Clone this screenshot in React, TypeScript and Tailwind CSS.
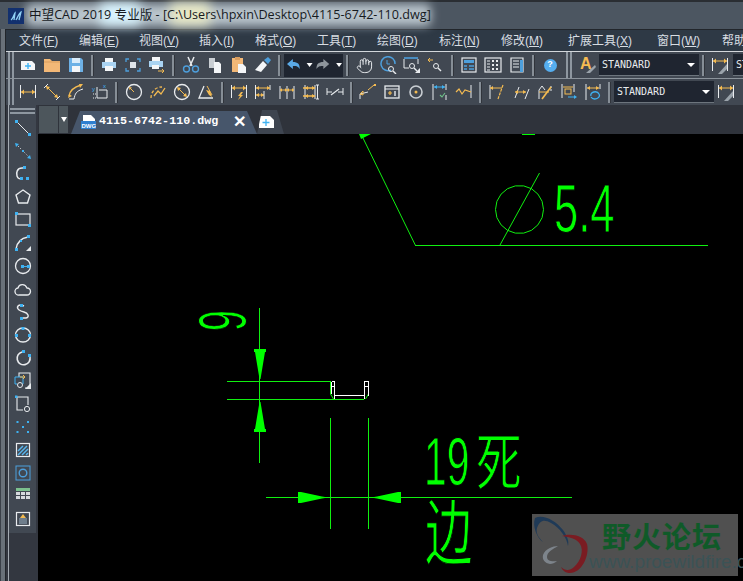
import type { ReactNode } from "react"
import { Hand } from "lucide-react"

const B = "#3fb2f2"
const W = "#e8ebee"
const O = "#f4bb52"
const G = "#00ff00"

const Ico = ({ children }: { children: ReactNode }) => (
  <svg width="18" height="18" viewBox="0 0 18 18" fill="none">
    {children}
  </svg>
)

const Btn = ({ children }: { children: ReactNode }) => (
  <div className="flex h-full w-6 shrink-0 items-center justify-center">{children}</div>
)

const Sep = () => (
  <div className="flex h-full w-[9px] shrink-0 items-center justify-center">
    <div className="h-[21px] w-[3px] border-r border-[#30343b] bg-[#868e96]" />
  </div>
)

const Grip = () => (
  <div className="flex h-full w-[10px] shrink-0 items-center justify-start gap-[2px] pl-[2px]">
    <div className="h-[26px] w-[2px] bg-[#8e97a0]" />
    <div className="h-[26px] w-[2px] bg-[#8e97a0]" />
  </div>
)

const Combo = () => (
  <div className="flex h-[22px] w-[100px] shrink-0 items-center justify-between border-b border-[#6d757d] bg-[#1f2530] px-[3px] font-['DejaVu_Sans_Mono',monospace] text-[10px] text-[#e8ebee]">
    <span>STANDARD</span>
    <span className="mr-[1px] h-0 w-0 border-x-[4px] border-t-[4px] border-x-transparent border-t-white" />
  </div>
)

// little dimension glyph: two white bars with a gold arrow between them
const DimBars = ({ y = 5 }: { y?: number }) => (
  <>
    <path d="M1.5 2v13M16.5 2v13" stroke={W} />
    <path d={`M2 ${y + 2}h14`} stroke={O} />
    <path d={`M2 ${y + 2}l3-2.5v5zM16 ${y + 2}l-3-2.5v5z`} fill={O} />
  </>
)

const Lens = ({ x = 12, y = 12 }: { x?: number; y?: number }) => (
  <>
    <circle cx={x} cy={y} r="2.5" stroke={W} />
    <path d={`M${x + 2} ${y + 2}l3 3`} stroke={W} strokeWidth="1.4" />
  </>
)

const top1: ReactNode[] = [
  <Ico><path d="M2 5h11l3 3v6H2z" fill="#f4f6f8" /><path d="M9 7v6M6 10h6" stroke={B} strokeWidth="1.4" /></Ico>,
  <Ico><path d="M1 3h6l2 2h8v11H1z" fill="#f3b877" /><path d="M1 6h16" stroke="#d99d5f" /></Ico>,
  <Ico><path d="M2 2h12l2 2v12H2z" fill="#6db1e6" /><rect x="5" y="2" width="8" height="5" fill="#d9ecfa" /><rect x="5" y="10" width="8" height="6" fill="#f4f6f8" /></Ico>,
]
const top2: ReactNode[] = [
  <Ico><rect x="5" y="2" width="8" height="4" fill="#f4f6f8" /><rect x="2" y="6" width="14" height="6" fill="#a9d3f2" /><rect x="5" y="10" width="8" height="5" fill="#f4f6f8" /></Ico>,
  <Ico><path d="M2 6V3h3M13 3h3v3M16 12v3h-3M5 15H2v-3" stroke="#4d9fdc" strokeWidth="1.3" /><rect x="6" y="6" width="6" height="6" fill="#dfe3e7" /></Ico>,
  <Ico><rect x="4" y="1" width="8" height="4" fill="#f4f6f8" /><rect x="1" y="5" width="14" height="6" fill="#a9d3f2" /><rect x="4" y="9" width="7" height="4" fill="#f4f6f8" /><path d="M10 15h6M14 13l2 2-2 2" stroke={O} /></Ico>,
]
const top3: ReactNode[] = [
  <Ico><path d="M6 1l4 9M12 1l-4 9" stroke={W} strokeWidth="1.5" /><circle cx="4.5" cy="13" r="3" stroke="#4d9fdc" strokeWidth="1.4" /><circle cx="13.5" cy="13" r="3" stroke="#4d9fdc" strokeWidth="1.4" /></Ico>,
  <Ico><path d="M3 2h6v10H3z" fill="#c9ced3" /><path d="M8 6h5l2 2v9H8z" fill="#f4f6f8" /></Ico>,
  <Ico><rect x="2" y="2" width="11" height="14" fill="#f3b877" /><rect x="5" y="1" width="5" height="3" fill="#d99d5f" /><path d="M8 8h5l3 3v6H8z" fill="#f4f6f8" /></Ico>,
  <Ico><path d="M9 5l4 4-6 7-6-2z" fill="#f4f6f8" /><path d="M10 4l4-3 3 3-3 4z" fill="#4d9fdc" /></Ico>,
]
const top4: ReactNode[] = [
  <Hand size={17} color={W} strokeWidth={1.4} />,
  <Ico><path d="M12 14a7 7 0 1 1 4-6" stroke="#4d9fdc" strokeWidth="1.5" /><path d="M8 4v4h3" stroke="#4d9fdc" /><Lens x={12} y={13} /></Ico>,
  <Ico><path d="M1 2h14" stroke="#4d9fdc" strokeWidth="1.6" /><path d="M1 3v9h5M15 3v5" stroke={W} /><Lens x={9} y={10} /><path d="M17 12v5h-5z" fill={W} /></Ico>,
  <Ico><path d="M1 4h5M1 4l2-2M1 4l2 2" stroke={O} /><Lens x={9} y={10} /></Ico>,
]
const top5: ReactNode[] = [
  <Ico><rect x="2" y="2" width="14" height="14" stroke={W} strokeWidth="1.2" /><rect x="4" y="4" width="10" height="3" fill="#4d9fdc" /><path d="M4 10h3M9 10h5M4 13h3M9 13h5" stroke="#4d9fdc" strokeWidth="1.5" /></Ico>,
  <Ico><rect x="1" y="2" width="16" height="14" stroke={W} strokeWidth="1.2" /><path d="M3 5h3M3 8h3M3 11h3M3 14h3" stroke={W} /><path d="M8 4h2v2H8zM12 4h2v2h-2zM8 8h2v2H8zM12 8h2v2h-2zM8 12h2v2H8zM12 12h2v2h-2z" fill={W} /></Ico>,
  <Ico><path d="M3 2h12v14H3z" stroke={W} strokeWidth="1.2" /><path d="M5 5h6M5 8h6M5 11h6" stroke={W} /><path d="M12 4h3v12h-3z" fill="#4d9fdc" /></Ico>,
]
const row2a: ReactNode[] = [
  <Ico><DimBars y={7} /></Ico>,
  <Ico><path d="M1 5l4-4M13 17l4-4" stroke={W} /><path d="M3 3l12 12" stroke={O} /><path d="M3 3l4 1-3 3zM15 15l-4-1 3-3z" fill={O} /></Ico>,
  <Ico><path d="M2 16h5c1-5 2-8 9-10" stroke={W} /><path d="M2 13c1-6 5-9 12-11" stroke={O} strokeWidth="1.4" /><path d="M1 15l4-2-3-2zM16 1l-4 0 1 4z" fill={O} /></Ico>,
  <Ico><path d="M6 4v11h10V7H8" stroke={W} /><path d="M2 11h4M2 15h4" stroke={W} strokeDasharray="1 1" /><text x="1" y="8" fontSize="6" fill={B}>y</text><text x="12" y="5" fontSize="6" fill={B}>x</text></Ico>,
]
const row2b: ReactNode[] = [
  <Ico><circle cx="9" cy="9" r="7.5" stroke={W} strokeWidth="1.3" /><path d="M9 9L5 5" stroke={O} /><path d="M4 4l3 .5-2.5 2.5z" fill={O} /></Ico>,
  <Ico><path d="M2 15c0-5 3-11 11-11" stroke={O} strokeDasharray="3 2" strokeWidth="1.3" /><path d="M5 13l4-5 3 3 4-6" stroke={O} strokeWidth="1.3" /></Ico>,
  <Ico><circle cx="9" cy="9" r="7.5" stroke={W} strokeWidth="1.3" /><path d="M5 5l8 8" stroke={O} /><path d="M4 4l4 1-3 3zM14 14l-4-1 3-3z" fill={O} /></Ico>,
  <Ico><path d="M7 3L2 15h14" stroke={W} strokeWidth="1.3" /><path d="M10 3l5 9" stroke={O} /><path d="M9 7l4 1 2 6-3-2z" fill={O} /></Ico>,
]
const row2c: ReactNode[] = [
  <Ico><DimBars y={3} /><path d="M11 9l-3 4h2l-2 4 5-5h-2l2-3z" fill={O} /></Ico>,
  <Ico><path d="M1.5 2v14M16 2v5" stroke={W} /><path d="M2 5h14M2 12h8" stroke={O} /><path d="M2 5l3-2v4zM16 5l-3-2v4zM2 12l3-2v4zM10 12l-3-2v4z" fill={O} /><path d="M10 8v8" stroke={W} /></Ico>,
  <Ico><path d="M2 3v13M9 3v13M16 3v13" stroke={W} /><path d="M2 7h14" stroke={O} /><path d="M2 7l2-2v4zM9 7l-2-2v4zM9 7l2-2v4zM16 7l-2-2v4z" fill={O} /></Ico>,
  <Ico><path d="M3 2v14M13 2v14" stroke={W} /><path d="M14 2h3M14 16h3M15.5 2v14" stroke={W} /><path d="M1 5h12M1 13h12" stroke={O} strokeWidth="1.3" /><path d="M3 5l3-2v4zM13 5l-3-2v4zM3 13l3-2v4zM13 13l-3-2v4z" fill={O} /></Ico>,
  <Ico><path d="M1 5v7M17 5v7M1 9h5M12 9h5" stroke={W} /><path d="M5 12l8-6" stroke={W} strokeWidth="1.2" /></Ico>,
]
const row2d: ReactNode[] = [
  <Ico><path d="M1 16v-5l8-2" stroke={W} /><path d="M1 11l3-3v4zM9 7l6-5" stroke={O} /><rect x="15" y="1" width="2" height="2" fill={O} /></Ico>,
  <Ico><rect x="2" y="3" width="14" height="12" stroke={W} strokeWidth="1.3" /><path d="M2 6h14" stroke={W} /><path d="M5 10h4M7 8v4" stroke={O} strokeWidth="1.2" /><path d="M12 8v5" stroke={W} strokeWidth="1.4" /></Ico>,
  <Ico><circle cx="9" cy="9" r="6" stroke="#c9ced3" strokeWidth="1.6" /><circle cx="9" cy="9" r="1.5" fill={O} /></Ico>,
  <Ico><path d="M2 1v16M15 1v6M15 12v5" stroke={W} /><path d="M3 4h11" stroke={B} /><path d="M3 4l3-2v4zM14 4l-3-2v4z" fill={B} /><path d="M9 12l2 2 3-4" stroke="#6fc28a" strokeWidth="1.1" /></Ico>,
  <Ico><path d="M16 2v13" stroke={W} /><path d="M1 9l3-3 3 5 3-4 6 2" stroke={O} strokeWidth="1.2" /></Ico>,
]
const row2e: ReactNode[] = [
  <Ico><path d="M2 2v14" stroke={W} /><path d="M2 5h12" stroke={O} /><path d="M2 5l3-2v4z" fill={O} /><path d="M15 2l-5 14" stroke={O} strokeWidth="1.2" strokeDasharray="3 1" /></Ico>,
  <Ico><path d="M3 15l4-11M13 16l4-10" stroke={W} /><path d="M3 9h11" stroke={O} /><path d="M3 9l3-2v4zM14 9l-3-2v4z" fill={O} /></Ico>,
  <Ico><path d="M3 16V7l3-4 3 4" stroke={W} /><path d="M15 3v5" stroke={W} strokeDasharray="2 1" /><path d="M3 9h10" stroke={O} /><path d="M6 16l9-12" stroke={O} strokeWidth="1.7" /></Ico>,
  <Ico><path d="M2 1v14M14 1v8" stroke={W} /><path d="M3 4h10" stroke={O} /><rect x="5" y="6" width="6" height="5" stroke={O} /><path d="M8 14h6" stroke={B} /><path d="M17 14l-3-2v4z" fill={B} /></Ico>,
  <Ico><path d="M2 1v16M16 1v5" stroke={W} /><path d="M3 5h12" stroke={O} /><path d="M3 5l3-2v4zM15 5l-3-2v4z" fill={O} /><path d="M7 13a4 3 0 0 1 8-2M15 11a4 3 0 0 1-8 3" stroke={B} strokeWidth="1.3" /></Ico>,
]
const dimStyle = (
  <Ico>
    <DimBars y={3} />
    <path d="M16 8v5l-5 5H7z" fill="#9aa3ab" />
  </Ico>
)

const side: ReactNode[] = [
  <Ico><path d="M3 3l12 12" stroke={W} /><rect x="1" y="1" width="3" height="3" fill={B} /><rect x="14" y="14" width="3" height="3" fill={B} /></Ico>,
  <Ico><path d="M2 2l14 14" stroke={W} strokeDasharray="1 2" /><path d="M1 1l4 1-3 3zM17 17l-4-1 3-3z" fill={B} /><rect x="8" y="8" width="2" height="2" fill={B} /></Ico>,
  <Ico><path d="M11 3H8C3 3 2 8 3 11c1 3 3 3 6 3" stroke={W} strokeWidth="1.5" /><rect x="9" y="1" width="3" height="3" fill={B} /><rect x="6" y="12" width="3" height="3" fill={B} /><rect x="12" y="12" width="3" height="3" fill={B} /></Ico>,
  <Ico><path d="M9 2l7 5-2.5 8h-9L2 7z" stroke={W} strokeWidth="1.4" /></Ico>,
  <Ico><rect x="2" y="3" width="14" height="11" stroke={W} strokeWidth="1.2" /><rect x="1" y="1" width="3" height="3" fill={B} /><rect x="14" y="13" width="3" height="3" fill={B} /></Ico>,
  <Ico><path d="M2 15C3 8 8 4 14 3" stroke={W} strokeWidth="1.5" /><rect x="13" y="1" width="3" height="3" fill={B} /><rect x="1" y="14" width="3" height="3" fill={B} /><rect x="6" y="6" width="2" height="2" fill={B} /><path d="M17 12v5h-5z" fill={W} /></Ico>,
  <Ico><circle cx="9" cy="9" r="7.5" stroke={W} strokeWidth="1.3" /><rect x="7" y="8" width="3" height="3" fill={B} /><rect x="13" y="8" width="3" height="3" fill={B} /><path d="M9 9.5h5" stroke={B} /></Ico>,
  <Ico><path d="M5 15a3.5 3.5 0 0 1-1-7c1-4 7-5 9 0a3.5 3.5 0 0 1 0 7z" stroke={W} strokeWidth="1.3" /></Ico>,
  <Ico><path d="M4 3c2-2 6 0 6 0M4 3c-2 3 2 5 6 6 4 1 6 5 2 6H7" stroke={W} strokeWidth="1.4" /><rect x="6" y="1" width="3" height="3" fill={B} /><rect x="6" y="14" width="3" height="3" fill={B} /></Ico>,
  <Ico><ellipse cx="9" cy="9" rx="7.5" ry="7" stroke={W} strokeWidth="1.4" /><rect x="7.5" y="1" width="3" height="3" fill={B} /><rect x="1" y="8" width="3" height="3" fill={B} /><rect x="14" y="8" width="3" height="3" fill={B} /></Ico>,
  <Ico><path d="M8 3a6.5 6.5 0 1 0 8 5" stroke={W} strokeWidth="1.6" /><rect x="8" y="1" width="3" height="3" fill={B} /><rect x="14" y="5" width="3" height="3" fill={B} /></Ico>,
  <Ico><path d="M5 5V1h11v15h-5" stroke={W} strokeWidth="1.1" /><path d="M1 5h8v7" stroke={B} /><path d="M1 5v7h2" stroke={B} /><path d="M6 5h5M9 3l2 2-2 2" stroke={O} /><circle cx="6" cy="13" r="2.5" stroke={W} /><path d="M17 11v6h-6z" fill={W} /></Ico>,
  <Ico><path d="M3 2h11v8M3 2v13h6" stroke={W} strokeWidth="1.1" /><rect x="1" y="0.5" width="2.5" height="2.5" fill={B} /><circle cx="13" cy="14" r="2.6" stroke={W} /></Ico>,
  <Ico><path d="M2.5 3h2v2h-2zM13 3h2v2h-2zM8 8h2v2H8zM2.5 13h2v2h-2zM13 13h2v2h-2z" fill={B} /></Ico>,
  <Ico><rect x="2.5" y="2.5" width="13" height="13" stroke={W} strokeWidth="1.2" /><path d="M4 10l5-5M4 14l9-9M8 14l6-6M12 14l2-2" stroke="#58b6ee" strokeWidth="1.5" /></Ico>,
  <Ico><rect x="2" y="2" width="14" height="14" stroke="#4d9fdc" strokeWidth="1" /><circle cx="9" cy="9" r="3.8" stroke="#4d9fdc" strokeWidth="1.4" /></Ico>,
  <Ico><rect x="2" y="1" width="14" height="3" fill="#7cc08e" /><path d="M2 5h4v3H2zM7 5h4v3H7zM12 5h4v3h-4zM2 9h4v3H2zM7 9h4v3H7zM12 9h4v3h-4z" fill="#d5d9dd" /></Ico>,
  <Ico><rect x="2.5" y="2.5" width="13" height="13" stroke={W} strokeWidth="1.2" /><path d="M9 4l3 4H6z" fill={O} /><path d="M5 9h8M5 11h8M5 13h8" stroke="#9fb4c6" /></Ico>,
]

const menus: [string, string, string][] = [
  ["文件", "F", "w-[60px]"],
  ["编辑", "E", "w-[60px]"],
  ["视图", "V", "w-[60px]"],
  ["插入", "I", "w-[56px]"],
  ["格式", "O", "w-[62px]"],
  ["工具", "T", "w-[60px]"],
  ["绘图", "D", "w-[62px]"],
  ["标注", "N", "w-[62px]"],
  ["修改", "M", "w-[67px]"],
  ["扩展工具", "X", "w-[89px]"],
  ["窗口", "W", "w-[65px]"],
  ["帮助", "H", "w-[60px]"],
]

// the drawn diameter symbol is a coarse polygon in the original
const diaPts = Array.from({ length: 18 }, (_, i) => {
  const a = (i / 18) * Math.PI * 2
  return `${(519.5 + 24 * Math.cos(a)).toFixed(1)},${(209.5 + 24 * Math.sin(a)).toFixed(1)}`
}).join(" ")

const Arrow = ({ d }: { d: string }) => <path d={d} fill={G} />

const Drawing = () => (
  <svg className="h-full w-full" viewBox="38 134 705 447" fill="none">
    {/* leader and diameter note */}
    <g stroke="#10f010" strokeWidth="1">
      <path d="M362 136L415.5 245.5" />
      <path d="M415 245.5H708" shapeRendering="crispEdges" />
      <path d="M500 245L539.5 173" />
      <polygon points={diaPts} />
      <path d="M259.5 308V463M227 381.5H331M227 399.5H364M330.5 418V529M368.5 418V529M266 497.5H572" shapeRendering="crispEdges" />
      <path d="M330.5 381v13l3 5M368.5 381v13l-3 5" />
    </g>
    <Arrow d="M359 134h12l-10 5z" />
    <rect x="522" y="133" width="13" height="2" fill={G} />
    <Arrow d="M254 349h12v3h-1l-3.5 21-1 6h-1l-1-6-3.5-21h-1z" />
    <Arrow d="M254 432h12v-3h-1l-3.5-21-1-6h-1l-1 6-3.5 21h-1z" />
    <Arrow d="M298 492h3l21 4.5 6 1-6 1-21 4.5h-3z" />
    <Arrow d="M401 492h-3l-21 4.5-6 1 6 1 21 4.5h3z" />
    {/* part outline */}
    <g stroke="#ffffff" strokeWidth="1" shapeRendering="crispEdges">
      <path d="M331.5 381.5h3v14h30v-14h4v14M331.5 381.5v12M331 386.5h3M364 386.5h4M334.5 395.5v3M364.5 395.5v3" />
    </g>
    {/* dimension text, black outline keeps the strokes thin like the CAD font */}
    <g className="font-['Liberation_Sans','Noto_Sans_CJK_SC',sans-serif]" fill={G} stroke="#000000" strokeWidth="1">
      <text transform="translate(554,232) scale(0.64,1)" fontSize="68">5.4</text>
      <text transform="translate(424,485) scale(0.6,1)" fontSize="68">19</text>
      <text transform="translate(246,331) rotate(-90) scale(0.55,1)" fontSize="68">9</text>
      <text transform="translate(476,485) scale(0.95,1.3)" fontSize="48" strokeWidth="0.7">死</text>
      <text transform="translate(425,558) scale(0.95,1.42)" fontSize="50" strokeWidth="0.7">边</text>
    </g>
  </svg>
)

const Watermark = () => (
  <div className="absolute bottom-[5px] right-[5px] flex h-[62px] w-[206px] bg-[#505050]">
    <svg className="absolute left-0 top-0" width="62" height="62" viewBox="0 0 62 62" fill="none">
      <path d="M3 4c8-4 20 2 28 12 5 7 6 12 5 16C35 24 28 14 19 9 12 5 8 6 5 14c-1 4 0 8 6 14C5 24 0 12 3 4z" fill="#1f3a57" />
      <path d="M30 22c8-3 22-1 25 8 3 12-6 30-18 29-3 0-7-3-8-6 4 4 9 4 13 0 7-6 10-17 6-23-3-5-10-7-18-8z" fill="#7a1c22" />
      <path d="M26 32c-5 0-13 3-15 9-1 5 2 8 7 9 2 0 5-1 7-3-5 1-10 0-10-4 0-5 6-8 11-11z" fill="#7d848b" />
    </svg>
    <div className="relative ml-[57px] flex flex-col">
      <div className="ml-[13px] mt-[6px] font-['Noto_Sans_CJK_SC',sans-serif] text-[29px] font-bold leading-[30px] tracking-[1px] text-[#0f5a28]">野火论坛</div>
      <div className="mt-[1px] whitespace-nowrap font-['Liberation_Sans',sans-serif] text-[19px] leading-[22px] text-[#3b5356]">www.proewildfire.cn</div>
    </div>
  </div>
)

export default function App() {
  return (
    <div className="flex h-[581px] w-[743px] flex-col overflow-hidden bg-[#333740] font-['Liberation_Sans','Noto_Sans_CJK_SC',sans-serif]">
      {/* title bar */}
      <div className="relative flex h-[29px] shrink-0 items-center border-t-2 border-[#2a2e33] bg-[#4c5661]">
        <div className="absolute left-[26px] top-[2px] h-[22px] w-[405px] rounded-md bg-[#b9c4cc] blur-[5px]" />
        <div className="absolute left-[100px] top-[1px] h-[22px] w-[40px] bg-[#d8f4ff] blur-[6px]" />
        <div className="absolute left-[170px] top-[1px] h-[22px] w-[40px] bg-[#e9e9c4] blur-[6px]" />
        <svg className="relative ml-[8px]" width="16" height="16" viewBox="0 0 16 16">
          <rect width="16" height="16" fill="#12306e" />
          <path d="M3 12c2-1 3-6 4-7l-1 7M8 12c2-3 3-7 5-8l-2 8" stroke="#8fd0f5" strokeWidth="1.3" fill="none" />
        </svg>
        <span className="relative ml-[5px] whitespace-nowrap font-['Open_Sans','Noto_Sans_CJK_SC',sans-serif] text-[12.6px] text-[#161a1e]">
          中望CAD 2019 专业版 - [C:\Users\hpxin\Desktop\4115-6742-110.dwg]
        </span>
      </div>

      <div className="flex min-h-0 flex-1">
        {/* window border */}
        <div className="w-[6px] shrink-0 border-l border-r border-l-[#3a4048] border-r-[#22262b] bg-[#697179]" />

        <div className="flex min-w-0 flex-1 flex-col">
          {/* menu */}
          <div className="flex h-[22px] shrink-0 items-center border-t border-[#22262b] bg-[#2e3945] pl-[13px] text-[12px] text-[#d8dde2]">
            {menus.map(([label, key, w]) => (
              <span key={label} className={`shrink-0 whitespace-nowrap ${w}`}>
                {label}(<u>{key}</u>)
              </span>
            ))}
          </div>

          {/* first toolbar */}
          <div className="flex h-[27px] shrink-0 items-center border-t border-[#d3d7db] bg-[#414852]">
            <Grip />
            {top1.map((icon, i) => <Btn key={i}>{icon}</Btn>)}
            <Sep />
            {top2.map((icon, i) => <Btn key={i}>{icon}</Btn>)}
            <Sep />
            <div className="w-[1px] shrink-0" />
            {top3.map((icon, i) => <Btn key={i}>{icon}</Btn>)}
            <Sep />
            <div className="flex h-[23px] w-[59px] shrink-0 items-center bg-[#1f2530] pl-[2px]">
              <svg width="58" height="16" viewBox="0 0 58 16" fill="none">
                <path d="M1 7l6-5v3c5 0 7 2 7 7-2-3-4-3-7-3v3z" fill="#5aa9e6" />
                <path d="M21 6h6l-3 4z" fill="#fff" />
                <path d="M44 7l-6-5v3c-5 0-7 2-7 7 2-3 4-3 7-3v3z" fill="#8e959c" />
                <path d="M51 6h6l-3 4z" fill="#fff" />
              </svg>
            </div>
            <Sep />
            {top4.map((icon, i) => <Btn key={i}>{icon}</Btn>)}
            <Sep />
            {top5.map((icon, i) => <Btn key={i}>{icon}</Btn>)}
            <Sep />
            <Btn>
              <div className="flex h-[13px] w-[13px] items-center justify-center rounded-full bg-[#55aef0] text-[9px] font-bold text-white">?</div>
            </Btn>
            <div className="w-[2px] shrink-0" />
            <Grip />
            <div className="w-[1px] shrink-0" />
            <Btn>
              <Ico><text x="2" y="13" fontSize="16" fontWeight="700" fill={O}>A</text><path d="M3 15h7M17 9l1 2-6 6H8z" fill="#9aa3ab" /></Ico>
            </Btn>
            <Combo />
            <Sep />
            <Btn>{dimStyle}</Btn>
            <div className="w-[1px] shrink-0" />
            <Combo />
          </div>

          {/* second toolbar */}
          <div className="flex h-[27px] shrink-0 items-center border-t border-[#8b939b] bg-[#414852]">
            <Grip />
            {row2a.map((icon, i) => <Btn key={i}>{icon}</Btn>)}
            <Sep />
            <div className="w-[1px] shrink-0" />
            {row2b.map((icon, i) => <Btn key={i}>{icon}</Btn>)}
            <Sep />
            {row2c.map((icon, i) => <Btn key={i}>{icon}</Btn>)}
            <Sep />
            {row2d.map((icon, i) => <Btn key={i}>{icon}</Btn>)}
            <Sep />
            {row2e.map((icon, i) => <Btn key={i}>{icon}</Btn>)}
            <Sep />
            <Combo />
            <Btn>{dimStyle}</Btn>
          </div>

          <div className="flex min-h-0 flex-1">
            {/* left toolbar */}
            <div className="flex w-[32px] shrink-0 flex-col">
              <div className="ml-[2px] flex h-[428px] w-[28px] shrink-0 flex-col border-l border-[#a4abb2] bg-[#414852]">
                <div className="mx-[1px] mt-[3px] h-[2px] bg-[#8e97a0]" />
                <div className="mx-[1px] mt-[2px] h-[2px] bg-[#8e97a0]" />
                <div className="mt-[2px] flex flex-col">
                  {side.map((icon, i) => (
                    <div key={i} className="flex h-[23px] items-center justify-center">{icon}</div>
                  ))}
                </div>
              </div>
              <div className="ml-[2px] flex-1 border-l border-[#a4abb2]" />
            </div>

            <div className="flex min-w-0 flex-1 flex-col">
              {/* tabs */}
              <div className="relative flex h-[29px] shrink-0 items-end bg-[#2f333b]">
                <div className="mb-[1px] ml-[1px] h-[27px] w-[19px] shrink-0 bg-[#4d565c]" />
                <div className="mb-[1px] ml-[1px] flex h-[27px] w-[9px] shrink-0 items-center justify-center bg-[#4d565c]">
                  <span className="h-0 w-0 border-x-[3px] border-t-[5px] border-x-transparent border-t-white" />
                </div>
                <div className="ml-[3px] flex h-[23px] w-[186px] shrink-0 items-center bg-[#47566b] pb-[1px] pl-[10px] [clip-path:polygon(0_100%,9px_0,176px_0,100%_100%)]">
                  <svg width="15" height="15" viewBox="0 0 15 15">
                    <path d="M2 0h8l4 4v4H2z" fill="#fff" />
                    <rect y="6" width="15" height="8" fill="#2f7fd0" />
                    <text x="0.5" y="12.5" fontSize="6" fontWeight="700" fill="#fff">DWG</text>
                  </svg>
                  <span className="ml-[3px] font-['Liberation_Mono',monospace] text-[11.7px] font-bold text-white">4115-6742-110.dwg</span>
                  <span className="ml-[15px] text-[16px] font-bold leading-none text-white">✕</span>
                </div>
                <div className="flex h-[24px] w-[27px] shrink-0 items-center justify-start bg-[#3e4550] pl-[2px] [clip-path:polygon(0_100%,5px_0,20px_0,100%_100%)]">
                  <svg width="15" height="12" viewBox="0 0 15 12">
                    <path d="M0 0h11l4 4v8H0z" fill="#fff" />
                    <path d="M7 3v7M3.5 6.5h7" stroke={B} strokeWidth="1.3" />
                  </svg>
                </div>
              </div>

              {/* drawing area */}
              <div className="relative min-h-0 flex-1 bg-black">
                <Drawing />
                <Watermark />
              </div>
            </div>
          </div>
        </div>
      </div>
    </div>
  )
}
